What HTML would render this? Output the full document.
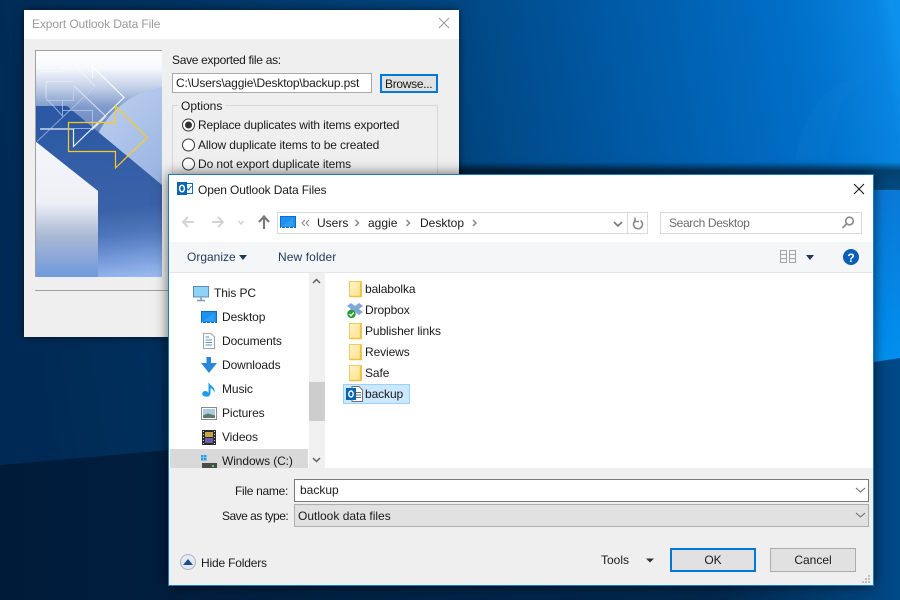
<!DOCTYPE html>
<html><head><meta charset="utf-8">
<style>
html,body{margin:0;padding:0;width:900px;height:600px;overflow:hidden;background:#00264d}
body{position:relative;font-family:"Liberation Sans",sans-serif;font-size:12px;color:#1a1a1a}
.a{position:absolute}
.t{position:absolute;white-space:nowrap;line-height:16px;height:16px}
.n{letter-spacing:-.1px}
svg{position:absolute;display:block}
</style></head><body>
<svg style="left:0;top:0" width="900" height="600" viewBox="0 0 900 600">
<defs>
<linearGradient id="bg1" gradientUnits="userSpaceOnUse" x1="0" y1="200" x2="900" y2="50"><stop offset="0" stop-color="#002a55"/><stop offset=".19" stop-color="#00315f"/><stop offset=".51" stop-color="#00457f"/><stop offset=".67" stop-color="#0057a0"/><stop offset=".78" stop-color="#0063b4"/><stop offset=".89" stop-color="#006fc8"/><stop offset=".98" stop-color="#0884e0"/><stop offset="1" stop-color="#0c92ee"/></linearGradient>
<linearGradient id="bg2" x1="0" y1="0" x2="1" y2="0"><stop offset="0" stop-color="#001b3a"/><stop offset=".8" stop-color="#00284e"/><stop offset="1" stop-color="#004a88"/></linearGradient>
<linearGradient id="bg3" x1="0" y1="0" x2="0" y2="1"><stop offset="0" stop-color="#0a78d6"/><stop offset="1" stop-color="#0090f0"/></linearGradient>
<linearGradient id="bg4" x1="0" y1="0" x2="0" y2="1"><stop offset="0" stop-color="#000" stop-opacity="0"/><stop offset=".3" stop-color="#000" stop-opacity=".5"/><stop offset="1" stop-color="#000" stop-opacity=".42"/></linearGradient>
</defs>
<rect width="900" height="600" fill="url(#bg1)"/>
<path d="M795 160C805 105 830 80 865 78C850 90 835 100 828 160Z" fill="#1a86dc" opacity=".15"/>
<polygon points="0,465 170,450 900,358 900,600 0,600" fill="url(#bg2)"/>
<polygon points="874,190 900,190 900,358 874,362" fill="url(#bg3)"/>
<rect x="459" y="162" width="441" height="28" fill="url(#bg4)"/>
</svg>

<!-- Export dialog -->
<div class="a" style="left:24px;top:10px;width:435px;height:327px;background:#efefef;box-shadow:0 0 8px rgba(0,0,0,.6)"></div>
<div class="a" style="left:24px;top:10px;width:435px;height:29px;background:#fff"></div>
<span class="t" style="left:32px;top:16px;color:#999;letter-spacing:-.1px">Export Outlook Data File</span>
<svg style="left:436px;top:15px" width="16" height="16"><path d="M3 3L13 13M13 3L3 13" stroke="#999" stroke-width="1" fill="none"/></svg>
<svg style="left:35px;top:50px" width="127" height="227" viewBox="35 50 127 227">
<defs>
<linearGradient id="i1" x1="0" y1="0" x2="0" y2="1"><stop offset="0" stop-color="#fff"/><stop offset=".08" stop-color="#f6f8fc"/><stop offset=".17" stop-color="#c0cde6"/><stop offset=".25" stop-color="#7f9bcc"/><stop offset=".4" stop-color="#5f82bf"/><stop offset="1" stop-color="#5f82bf"/></linearGradient>
<linearGradient id="i2" x1="0" y1="0" x2="0" y2="1"><stop offset="0" stop-color="#f5f6fb"/><stop offset=".45" stop-color="#eef0f6"/><stop offset=".7" stop-color="#a9b8d4"/><stop offset="1" stop-color="#7099dc"/></linearGradient>
<linearGradient id="i3" gradientUnits="userSpaceOnUse" x1="110" y1="106" x2="130" y2="277"><stop offset="0" stop-color="#2b58a4"/><stop offset=".6" stop-color="#3a62a8"/><stop offset=".75" stop-color="#4f77bc"/><stop offset=".9" stop-color="#7a9edc"/><stop offset="1" stop-color="#97b7ef"/></linearGradient>
<linearGradient id="i4" x1="0" y1="0" x2="1" y2="1"><stop offset="0" stop-color="#c2d3f0"/><stop offset="1" stop-color="#6f94d2"/></linearGradient>
</defs>
<rect x="35" y="50" width="127" height="227" fill="url(#i1)"/>
<circle cx="175" cy="172" r="86" fill="url(#i4)"/>
<polygon points="35,106 67,106 162,185 162,277 98,277 98,191 35,141" fill="url(#i3)"/>
<polygon points="35,141 98,191 98,277 35,277" fill="url(#i2)"/>
<g fill="none">
<path d="M62 60V71.500H40M70 60L95 86.500M46 81.500H73M46 81.500V98" stroke="#fff" stroke-width="1" opacity=".45"/>
<path d="M92.500 66.500L124 97.500L73.500 146.500V129H40" stroke="#fff" stroke-width="1.200" opacity=".9"/>
<path d="M92.500 66.500V78" stroke="#fff" stroke-width="1" opacity=".7"/>
<path d="M73.500 85.500L106 116.500L92 130" stroke="#e3eaf7" stroke-width="1.100" opacity=".85"/>
<path d="M73.500 85.500V100.500H46M62.500 101V116.500M46 98L63 116.500M63 110.500H92.500V128.500H73.500" stroke="#c8d6ee" stroke-width="1" opacity=".65"/>
<path d="M37 141.500L95 86.500" stroke="#c8d6ee" stroke-width="1" opacity=".6"/>
<path d="M115.500 106L147 137.500L115.500 168V151.500H68.500V122.500H115.500Z" stroke="#ffc820" stroke-width="1.200"/>
</g>
</svg>
<div class="a" style="left:35px;top:50px;width:127px;height:227px;box-sizing:border-box;border-top:1px solid #a0a0a0;border-left:1px solid #a0a0a0"></div>
<div class="a" style="left:35px;top:290px;width:134px;height:1px;background:#a0a0a0"></div>
<span class="t" style="left:172px;top:52px;letter-spacing:-.3px">Save exported file as:</span>
<div class="a" style="left:172px;top:73px;width:200px;height:20px;box-sizing:border-box;background:#fff;border:1px solid #a9a9a9"></div>
<span class="t" style="left:176px;top:75px;letter-spacing:-.15px">C:\Users\aggie\Desktop\backup.pst</span>
<div class="a" style="left:380px;top:74px;width:58px;height:19px;box-sizing:border-box;background:#e1e1e1;border:2px solid #0078d7"></div>
<span class="t" style="left:385px;top:76px;letter-spacing:-.3px">Browse...</span>
<div class="a" style="left:172px;top:105px;width:266px;height:80px;box-sizing:border-box;border:1px solid #d8d8d8"></div>
<span class="t" style="left:178px;top:98px;background:#efefef;padding:0 3px">Options</span>
<svg style="left:180px;top:116px" width="18" height="60"><circle cx="8.500" cy="9" r="6" fill="#fff" stroke="#333"/><circle cx="8.500" cy="9" r="3.500" fill="#333"/><circle cx="8.500" cy="29" r="6" fill="#fff" stroke="#333"/><circle cx="8.500" cy="48" r="6" fill="#fff" stroke="#333"/></svg>
<span class="t" style="left:198px;top:117px;letter-spacing:-.18px">Replace duplicates with items exported</span>
<span class="t" style="left:198px;top:137px;letter-spacing:-.12px">Allow duplicate items to be created</span>
<span class="t" style="left:198px;top:156px;letter-spacing:-.08px">Do not export duplicate items</span>

<!-- Open dialog -->
<div class="a" style="left:168px;top:174px;width:706px;height:412px;box-sizing:border-box;border:1px solid #1a7cc4;background:#fff;box-shadow:0 0 12px rgba(0,0,0,.6)"></div>
<div class="a" style="left:169px;top:242px;width:704px;height:30px;background:#f5f6f7"></div>
<div class="a" style="left:169px;top:272px;width:704px;height:1px;background:#e6e6e6"></div>
<div class="a" style="left:169px;top:468px;width:704px;height:117px;background:#efefef"></div>
<div class="a" style="left:309px;top:273px;width:16px;height:195px;background:#f0f0f0"></div>
<div class="a" style="left:309px;top:382px;width:16px;height:39px;background:#cdcdcd"></div>
<div class="a" style="left:170px;top:449px;width:138px;height:19px;background:#d9d9d9"></div>
<div class="a" style="left:343px;top:384px;width:67px;height:20px;box-sizing:border-box;background:#cce8ff;border:1px solid #99d1ff"></div>

<span class="t" style="left:198px;top:182px;letter-spacing:-.13px">Open Outlook Data Files</span>
<div class="a" style="left:277px;top:212px;width:371px;height:22px;box-sizing:border-box;border:1px solid #d9d9d9;background:#fff"></div>
<div class="a" style="left:627px;top:212px;width:1px;height:22px;background:#d9d9d9"></div>
<div class="a" style="left:660px;top:212px;width:202px;height:22px;box-sizing:border-box;border:1px solid #d9d9d9;background:#fff"></div>
<span class="t" style="left:317px;top:215px">Users</span>
<span class="t" style="left:368px;top:215px">aggie</span>
<span class="t" style="left:420px;top:215px">Desktop</span>
<span class="t" style="left:669px;top:215px;color:#6d6d6d;letter-spacing:-.35px">Search Desktop</span>
<span class="t" style="left:187px;top:249px;color:#1e395b">Organize</span>
<span class="t" style="left:278px;top:249px;color:#1e395b;letter-spacing:.1px">New folder</span>

<span class="t n" style="left:214px;top:285px">This PC</span>
<span class="t n" style="left:222px;top:309px">Desktop</span>
<span class="t n" style="left:222px;top:333px">Documents</span>
<span class="t n" style="left:222px;top:357px">Downloads</span>
<span class="t n" style="left:222px;top:381px">Music</span>
<span class="t n" style="left:222px;top:405px">Pictures</span>
<span class="t n" style="left:222px;top:429px">Videos</span>
<span class="t n" style="left:222px;top:453px">Windows (C:)</span>

<span class="t n" style="left:365px;top:281px">balabolka</span>
<span class="t n" style="left:365px;top:302px">Dropbox</span>
<span class="t n" style="left:365px;top:323px">Publisher links</span>
<span class="t n" style="left:365px;top:344px">Reviews</span>
<span class="t n" style="left:365px;top:365px">Safe</span>
<span class="t n" style="left:365px;top:386px">backup</span>

<span class="t" style="left:235px;top:483px;letter-spacing:-.3px">File name:</span>
<span class="t" style="left:222px;top:508px;letter-spacing:-.5px">Save as type:</span>
<div class="a" style="left:294px;top:479px;width:575px;height:23px;box-sizing:border-box;border:1px solid #7a7a7a;background:#fff"></div>
<span class="t" style="left:300px;top:482px">backup</span>
<div class="a" style="left:294px;top:504px;width:575px;height:23px;box-sizing:border-box;border:1px solid #adadad;background:#e1e1e1"></div>
<span class="t" style="left:298px;top:508px">Outlook data files</span>
<span class="t" style="left:201px;top:555px;letter-spacing:-.18px">Hide Folders</span>
<span class="t" style="left:601px;top:552px">Tools</span>
<div class="a" style="left:670px;top:548px;width:86px;height:24px;box-sizing:border-box;border:2px solid #0078d7;background:#e1e1e1"></div>
<span class="t" style="left:670px;top:552px;width:86px;text-align:center">OK</span>
<div class="a" style="left:770px;top:548px;width:86px;height:24px;box-sizing:border-box;border:1px solid #adadad;background:#e1e1e1"></div>
<span class="t" style="left:770px;top:552px;width:86px;text-align:center">Cancel</span>

<!-- icons overlay -->
<svg style="left:0;top:0" width="900" height="600" viewBox="0 0 900 600">
<defs>
<linearGradient id="fld" x1="0" y1="0" x2="1" y2="1"><stop offset="0" stop-color="#fff4c8"/><stop offset="1" stop-color="#fde08a"/></linearGradient>
<g id="folder"><rect x="0.500" y="0.500" width="12" height="15" fill="url(#fld)" stroke="#eccb60"/><path d="M11.500 1V15.500H1" stroke="#efc140" stroke-width="1.400" fill="none"/></g>
<g id="mon"><rect x="0.500" y="0.500" width="15" height="11" fill="#1e90f0" stroke="#0f6cc0"/><path d="M2 10L13 2V10Z" fill="#2f9cf5"/><path d="M1 11.500H15" stroke="#fff" stroke-dasharray="1 3"/></g>
</defs>
<!-- outlook titlebar -->
<g transform="translate(177,180)"><rect x="8.500" y="3.500" width="7" height="10" fill="#fff" stroke="#0a6ec4"/><path d="M9.500 8l2 2 3-4" stroke="#0a6ec4" fill="none"/><path d="M0 2H10V15H0Z" fill="#0a64b4"/><ellipse cx="5" cy="8.500" rx="2.400" ry="3.300" fill="none" stroke="#fff" stroke-width="1.500"/></g>
<path d="M854 184L864 194M864 184L854 194" stroke="#111" stroke-width="1" fill="none"/>
<!-- nav arrows -->
<g fill="none" stroke="#d4d4d4" stroke-width="2"><path d="M183 222H194M188 217L183 222L188 227"/><path d="M212 222H223M218 217L223 222L218 227"/></g>
<path d="M238.500 221L241 224L243.500 221" stroke="#d4d4d4" stroke-width="1.500" fill="none"/>
<path d="M264 229V217M259 222L264 216.500L269 222" stroke="#7a7a7a" stroke-width="2.200" fill="none"/>
<g transform="translate(280,216)"><use href="#mon"/></g>
<path d="M305 220L302 223L305 226M309 220L306 223L309 226" stroke="#888" fill="none"/>
<g fill="none" stroke="#888" stroke-width="1.500"><path d="M355.500 220L358.500 223L355.500 226"/><path d="M406.500 220L409.500 223L406.500 226"/><path d="M473 220L476 223L473 226"/></g>
<path d="M614 222L618 226L622 222" stroke="#777" stroke-width="1.600" fill="none"/>
<path d="M640.500 220.500A4.500 4.500 0 1 1 635.500 220.500M635 217.500V221.500H639" stroke="#8a8a8a" stroke-width="1.600" fill="none"/>
<g fill="none" stroke="#888" stroke-width="1.600"><circle cx="849.500" cy="221" r="3.800"/><path d="M846.500 224L842.500 228"/></g>
<path d="M239 255H247L243 260Z" fill="#1e395b"/>
<g fill="none" stroke="#a5a5a5"><rect x="780.500" y="250.500" width="6" height="12"/><rect x="789.500" y="250.500" width="6" height="12"/><path d="M780 254.500H787M780 258.500H787M789 254.500H796M789 258.500H796"/></g>
<path d="M806 255H814L810 260Z" fill="#1e395b"/>
<circle cx="851" cy="257" r="8" fill="#0a5fb8"/>
<text x="851" y="262" font-family="Liberation Sans" font-weight="bold" font-size="12" fill="#fff" text-anchor="middle">?</text>
<!-- scrollbar arrows -->
<path d="M313 283L316.500 279.500L320 283" stroke="#606060" stroke-width="1.500" fill="none"/>
<path d="M313 458L316.500 461.500L320 458" stroke="#606060" stroke-width="1.500" fill="none"/>
<!-- nav icons -->
<g transform="translate(193,286)"><rect x="0.500" y="0.500" width="15" height="10.500" fill="#8ed2f8" stroke="#5a8fb5"/><path d="M4 14.500H12M8 11V14.500" stroke="#7a9ab5" stroke-width="1.500"/></g>
<g transform="translate(201,311)"><use href="#mon"/></g>
<g transform="translate(203,333)"><path d="M0.500 0.500H8L11.500 4V15.500H0.500Z" fill="#fff" stroke="#9aa5b0"/><path d="M2.500 4H6M2.500 7H9M2.500 9.500H9M2.500 12H9" stroke="#5c8fc0"/></g>
<path d="M206.500 357H211V363H217L209 373L201 363H206.500Z" fill="#2b86d8"/>
<path d="M206 396.500A3.200 2.800 0 1 1 208.500 393V382C210 386 216 387 214.500 393C213.500 389 211.500 388.500 210.500 388.500V393.500A3.500 3.500 0 0 1 206 396.500Z" fill="#1f9cf0"/>
<g transform="translate(201,407)"><rect x="0.500" y="0.500" width="15" height="12" fill="#fff" stroke="#8a8a8a"/><rect x="2" y="2" width="12" height="9" fill="#a9cbe0"/><path d="M2 8.500L7 6.500L14 8.500V11H2Z" fill="#5c7a66"/></g>
<g transform="translate(202,430)"><rect width="14" height="15" fill="#2a2a2a"/><rect x="3" y="2" width="8" height="5" fill="#c9a24a"/><rect x="3" y="8" width="8" height="5" fill="#6a5fa8"/><path d="M1.500 1V14M12.500 1V14" stroke="#ddd" stroke-dasharray="1 2"/></g>
<g transform="translate(201,455)"><path d="M0 0h2.500v2.500h-2.500zM3 0h2.500v2.500h-2.500zM0 3h2.500v2.500h-2.500zM3 3h2.500v2.500h-2.500z" fill="#1fa0e8"/><rect x="1" y="8" width="15" height="5" fill="#4a4a4a"/><rect x="11" y="10" width="2" height="2" fill="#4ce04c"/></g>
<!-- files -->
<use href="#folder" x="349" y="281"/>
<use href="#folder" x="349" y="323"/>
<use href="#folder" x="349" y="344"/>
<use href="#folder" x="349" y="365"/>
<g transform="translate(347,303)"><path d="M4 0L8 3L12 0L16 3L12 6L16 9L12 12L8 9L4 12L0 9L4 6L0 3Z" fill="#7fa8d8"/><circle cx="4.500" cy="11" r="4.200" fill="#2f9b3a"/><path d="M2.500 11L4 12.800L6.800 9.500" stroke="#fff" fill="none" stroke-width="1.200"/></g>
<g transform="translate(346,386)"><path d="M6 .5H13L16.500 4V15.500H6Z" fill="#fff" stroke="#707070"/><path d="M10 6.500H15M10 9H15M10 11.500H15" stroke="#707070"/><path d="M0 2H10V14H0Z" fill="#0a64b4"/><ellipse cx="5" cy="8" rx="2.200" ry="3" fill="none" stroke="#fff" stroke-width="1.400"/></g>
<!-- combo chevrons -->
<path d="M856 488L860.500 492L865 488" stroke="#666" fill="none"/>
<path d="M856 513L860.500 517L865 513" stroke="#666" fill="none"/>
<!-- hide folders -->
<circle cx="188" cy="562" r="7.500" fill="#e4e9f1" stroke="#a9b4c4"/>
<path d="M183 565L188 559L193 565Z" fill="#1e4d8c"/>
<path d="M646 558.500H654L650 562.500Z" fill="#333"/>
<!-- grip -->
<path d="M868 575h2v2h-2zM865 578h2v2h-2zM868 578h2v2h-2zM862 581h2v2h-2zM865 581h2v2h-2zM868 581h2v2h-2z" fill="#c0c0c0"/>
</svg>
</body></html>
